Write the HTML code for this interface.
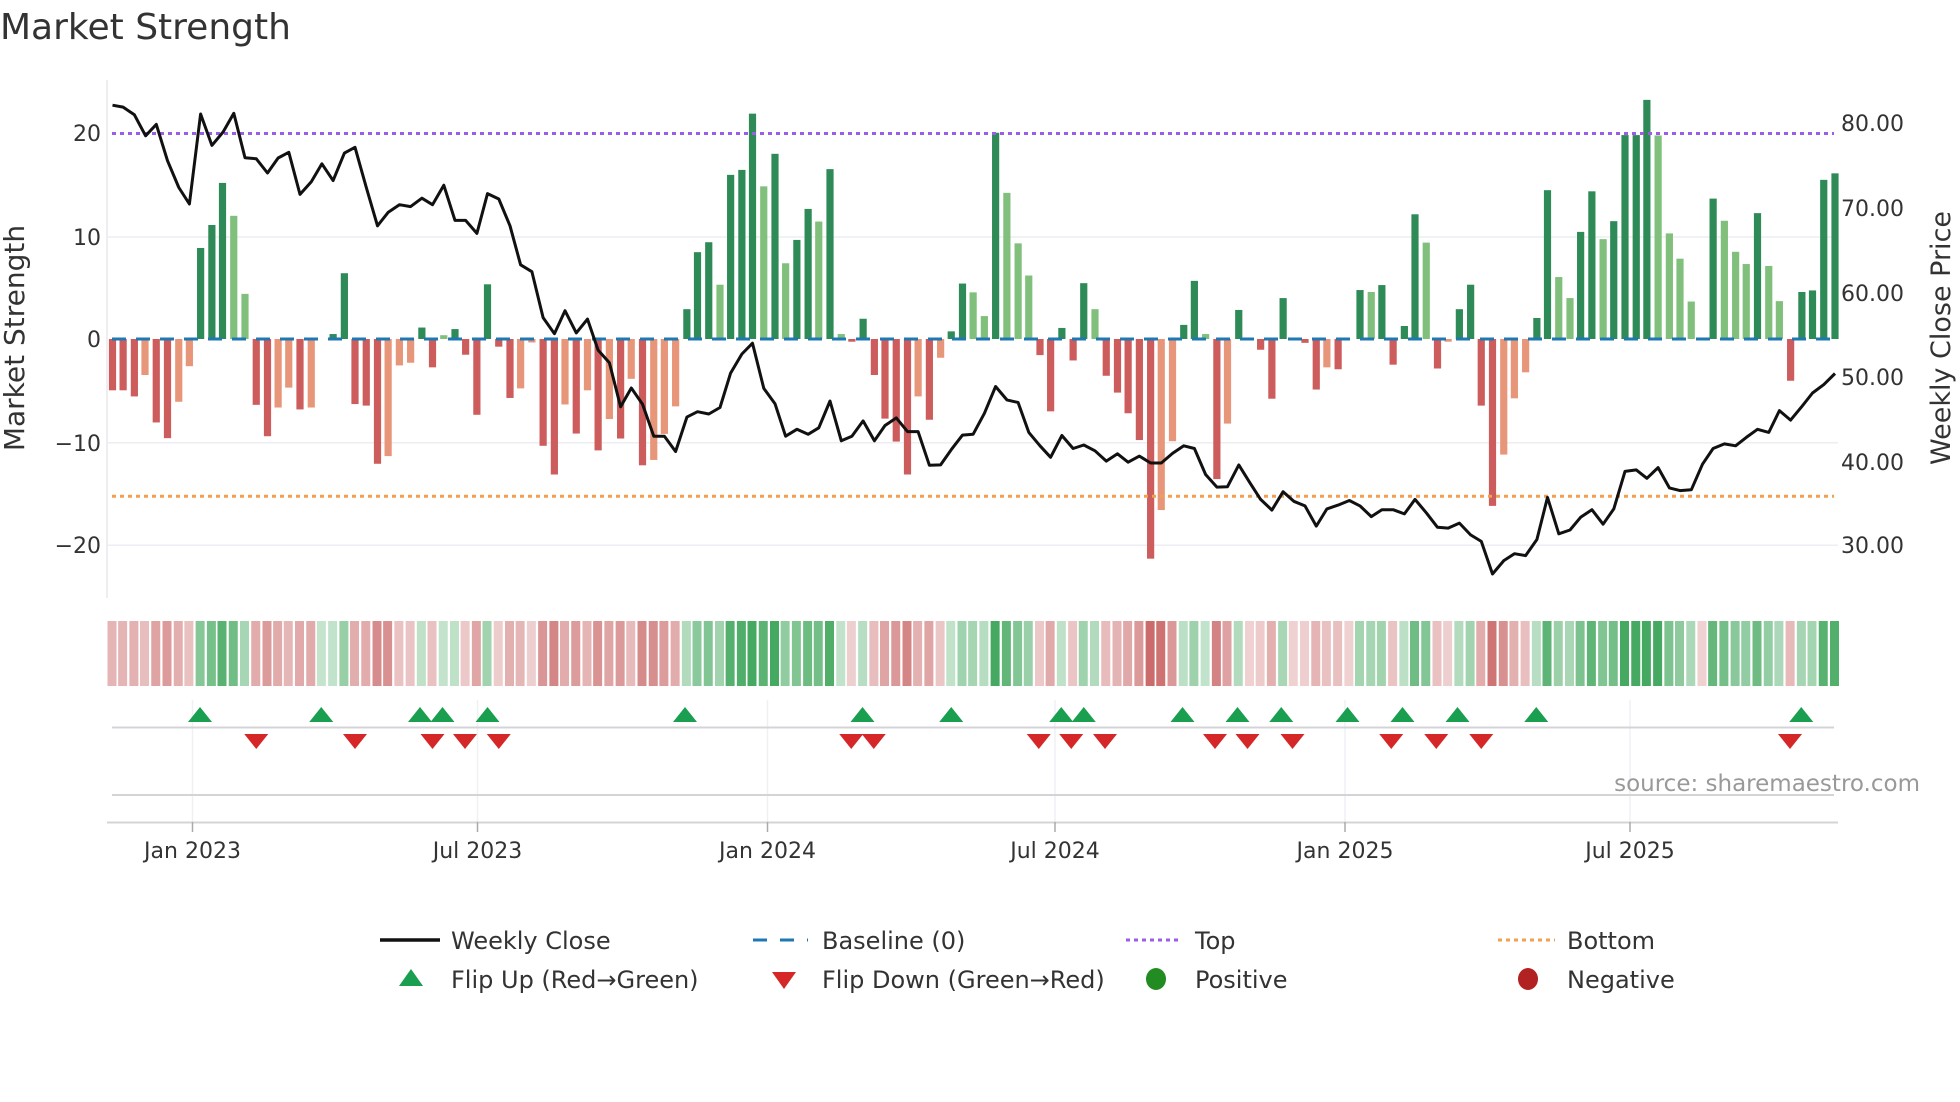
<!DOCTYPE html>
<html><head><meta charset="utf-8"><style>
html,body{margin:0;padding:0;background:#fff;}
svg{display:block;font-family:"DejaVu Sans","Liberation Sans",sans-serif;}
</style></head><body>
<svg id="s" width="1960" height="1102" viewBox="0 0 1960 1102" xmlns="http://www.w3.org/2000/svg">
<rect width="1960" height="1102" fill="#fff"/>
<text x="0" y="39" font-size="36" fill="#333">Market Strength</text>
<line x1="107" y1="80" x2="107" y2="598" stroke="#e8e8ee" stroke-width="1.5"/>
<g stroke="#eceef3" stroke-width="1.5">
<line x1="107" y1="237" x2="1838" y2="237"/>
<line x1="107" y1="442.7" x2="1838" y2="442.7"/>
<line x1="107" y1="545.3" x2="1838" y2="545.3"/>
</g>
<g font-size="22" fill="#333" text-anchor="end">
<text x="101" y="141">20</text>
<text x="101" y="245">10</text>
<text x="101" y="347">0</text>
<text x="101" y="451">−10</text>
<text x="101" y="553">−20</text>
</g>
<g font-size="22" fill="#333">
<text x="1841" y="131">80.00</text>
<text x="1841" y="216">70.00</text>
<text x="1841" y="301">60.00</text>
<text x="1841" y="385">50.00</text>
<text x="1841" y="470">40.00</text>
<text x="1841" y="553">30.00</text>
</g>
<text transform="translate(24,338) rotate(-90)" font-size="28" fill="#333" text-anchor="middle">Market Strength</text>
<text transform="translate(1950,338) rotate(-90)" font-size="27" fill="#333" text-anchor="middle">Weekly Close Price</text>
<g id="bars"></g>
<line x1="112" y1="339" x2="1834" y2="339" stroke="#1f77b4" stroke-width="3" stroke-dasharray="14,10"/>
<line x1="112" y1="133.5" x2="1834" y2="133.5" stroke="#9b5de5" stroke-width="3" stroke-dasharray="4,4"/>
<line x1="112" y1="496.3" x2="1834" y2="496.3" stroke="#f0a050" stroke-width="3" stroke-dasharray="4,4"/>
<polyline id="price" fill="none" stroke="#111" stroke-width="3" stroke-linejoin="round"/>
<g id="heat"></g>
<g stroke="#eef0f4" stroke-width="1.5">
<line x1="192.5" y1="700" x2="192.5" y2="822"/><line x1="477.5" y1="700" x2="477.5" y2="822"/>
<line x1="767.5" y1="700" x2="767.5" y2="822"/><line x1="1055" y1="700" x2="1055" y2="822"/>
<line x1="1345" y1="700" x2="1345" y2="822"/><line x1="1630" y1="700" x2="1630" y2="822"/>
</g>
<line x1="112" y1="727.5" x2="1834" y2="727.5" stroke="#d4d4d8" stroke-width="2"/>
<line x1="112" y1="795" x2="1834" y2="795" stroke="#d4d4d8" stroke-width="2"/>
<line x1="107" y1="822.5" x2="1838" y2="822.5" stroke="#d4d4d8" stroke-width="2"/>
<g stroke="#aaa" stroke-width="1.5">
<line x1="192.5" y1="822" x2="192.5" y2="832"/><line x1="477.5" y1="822" x2="477.5" y2="832"/>
<line x1="767.5" y1="822" x2="767.5" y2="832"/><line x1="1055" y1="822" x2="1055" y2="832"/>
<line x1="1345" y1="822" x2="1345" y2="832"/><line x1="1630" y1="822" x2="1630" y2="832"/>
</g>
<g id="tri"></g>
<g font-size="22" fill="#333" text-anchor="middle">
<text x="192.5" y="858">Jan 2023</text><text x="477.5" y="858">Jul 2023</text>
<text x="767.5" y="858">Jan 2024</text><text x="1055" y="858">Jul 2024</text>
<text x="1345" y="858">Jan 2025</text><text x="1630" y="858">Jul 2025</text>
</g>
<text x="1920" y="791" font-size="23" fill="#999" text-anchor="end">source: sharemaestro.com</text>
<g font-size="24" fill="#333">
<line x1="380" y1="940" x2="440" y2="940" stroke="#111" stroke-width="3.5"/>
<text x="451" y="949">Weekly Close</text>
<line x1="753" y1="940" x2="808" y2="940" stroke="#1f77b4" stroke-width="3" stroke-dasharray="14,13"/>
<text x="822" y="949">Baseline (0)</text>
<line x1="1126" y1="940" x2="1180" y2="940" stroke="#9b5de5" stroke-width="3" stroke-dasharray="4,4"/>
<text x="1195" y="949">Top</text>
<line x1="1498" y1="940" x2="1555" y2="940" stroke="#f0a050" stroke-width="3" stroke-dasharray="4,4"/>
<text x="1567" y="949">Bottom</text>
<polygon points="411,969 399,986 423,986" fill="#1a9e50"/>
<text x="451" y="988">Flip Up (Red→Green)</text>
<polygon points="772,972 796,972 784,989" fill="#d62728"/>
<text x="822" y="988">Flip Down (Green→Red)</text>
<ellipse cx="1156" cy="979" rx="10" ry="11" fill="#228b22"/>
<text x="1195" y="988">Positive</text>
<ellipse cx="1528" cy="979" rx="10" ry="11" fill="#b22222"/>
<text x="1567" y="988">Negative</text>
</g>
</svg>
<script>
var NS="http://www.w3.org/2000/svg";
var b1="180,1020,R;197,1020,R;215,1036,R;232,980,S;250,1104,R;268,1145,R;286,1050,S;303,957,S;321,648,D;339,588,D;356,478,D;374,564,L;392,768,L;410,1058,R;428,1140,R;445,1065,S;462,1013,S;480,1070,R;498,1065,S;515,884,D;533,873,D;551,714,D;568,1056,R;586,1060,R;604,1212,R;621,1192,S;639,955,S;657,948,S;675,856,D;692,960,R;710,876,L;728,860,D;745,927,R;763,1084,R;780,743,D;798,906,R;816,1040,R;833,1015,S;851,895,S;869,1165,R;887,1240,R;904,1057,S;922,1133,R;940,1020,S;957,1177,R;975,1095,S;993,1146,R;1010,990,S;1028,1216,R;1046,1202,S;1063,1134,S;1081,1062,S;1099,808,D;1116,659,D;1134,633,D;1152,744,L;1169,457,D;1187,444,D;1204,297,D;1222,487,L;1240,402,D;1257,688,L;1275,627,D;1293,546,D;1310,579,L;1328,442,D;1346,873,L;1363,893,R;1381,833,D;1399,980,R;1416,1094,R;1434,1154,R;1452,1240,R;1469,1036,S;1487,1097,R;1505,935,S;1522,866,D;1540,741,D;1557,764,L";
var b2="7,826,L;25,347,D;43,504,L;61,636,L;78,720,L;96,928,R;113,1075,R;131,857,D;149,942,R;166,740,D;184,808,L;202,982,R;220,1026,R;237,1080,R;255,1150,R;273,1460,R;290,1333,S;308,1153,S;326,849,D;343,734,D;361,873,L;379,1252,R;396,1107,S;414,810,D;432,886,D;449,914,R;467,1042,R;485,779,D;502,888,R;520,896,R;538,1018,R;555,960,S;573,965,R;591,886,D;608,758,D;626,763,L;643,745,D;661,953,R;679,852,D;696,560,D;714,634,L;732,963,R;749,893,S;767,808,D;785,744,D;802,1060,R;820,1322,R;838,1188,S;855,1041,S;873,973,S;891,831,D;908,497,D;926,724,L;944,779,L;961,606,D;979,500,D;997,625,L;1014,578,D;1032,353,D;1050,353,D;1067,261,D;1085,354,L;1103,610,L;1120,676,L;1138,788,L;1156,886,D;1173,519,D;1191,577,L;1209,658,L;1226,690,L;1244,557,D;1262,695,L;1279,787,L;1297,995,R;1315,763,D;1332,759,D;1350,470,D;1368,453,D";
var col={D:"#2e8b57",L:"#80c07c",R:"#cd5c5c",S:"#e8967a"};
var bars=document.getElementById("bars"),heat=document.getElementById("heat");
var all=[];
b1.split(";").forEach(function(s){var p=s.split(",");all.push([+p[0]*0.625,+p[1]*0.38265,p[2]]);});
b2.split(";").forEach(function(s){var p=s.split(",");all.push([980+ +p[0]*0.625,+p[1]*0.38265,p[2]]);});
all.forEach(function(a){
 var x=a[0],y=a[1],z=339,h=Math.abs(y-z);
 if(h>0.8){var r=document.createElementNS(NS,"rect");r.setAttribute("x",x-3.6);r.setAttribute("width",7.2);
 r.setAttribute("y",Math.min(y,z));r.setAttribute("height",h);r.setAttribute("fill",col[a[2]]);bars.appendChild(r);}
 var v=(z-y)/10.2;var m=Math.min(Math.abs(v)/18,1);var c;
 if(v>=0) c="rgba(50,160,80,"+(0.28+0.62*m)+")"; else c="rgba(190,70,70,"+(0.25+0.55*m)+")";
 var q=document.createElementNS(NS,"rect");q.setAttribute("x",x-5);q.setAttribute("width",9);q.setAttribute("y",621);q.setAttribute("height",65);q.setAttribute("fill",c);heat.appendChild(q);
});
var p1="180,275;197,280;215,300;233,355;250,325;268,420;286,490;303,533;321,298;339,380;357,345;374,296;392,412;410,415;428,452;445,413;462,398;480,508;498,475;515,428;533,472;551,400;568,385;586,490;604,590;621,555;639,535;657,540;675,518;692,535;710,484;728,576;745,576;763,610;780,506;798,520;816,590;833,692;851,710;869,830;887,872;904,812;922,870;940,834;957,915;975,948;993,1063;1010,1014;1028,1056;1046,1140;1063,1140;1081,1180;1099,1090;1116,1076;1134,1082;1152,1065;1169,975;1187,925;1204,897;1222,1015;1240,1055;1257,1140;1275,1122;1293,1135;1310,1118;1328,1048;1346,1152;1363,1140;1381,1100;1399,1152;1416,1112;1434,1092;1452,1128;1469,1128;1487,1216;1505,1215;1522,1175;1540,1137;1557,1135";
var p2="7,1080;25,1010;43,1045;61,1052;78,1130;96,1165;113,1195;131,1138;149,1172;166,1163;184,1178;202,1205;220,1186;237,1208;255,1192;273,1210;290,1210;308,1185;326,1165;343,1172;361,1240;379,1273;396,1272;414,1215;432,1262;449,1305;467,1333;485,1285;502,1310;520,1322;538,1375;555,1330;573,1320;591,1308;608,1322;626,1350;643,1332;661,1332;679,1343;696,1305;714,1340;732,1378;749,1380;767,1367;785,1398;802,1415;820,1500;838,1465;855,1447;873,1452;891,1410;908,1300;926,1395;944,1385;961,1352;979,1332;997,1370;1014,1330;1032,1232;1050,1228;1067,1250;1085,1222;1103,1275;1120,1282;1138,1280;1156,1213;1173,1172;1191,1160;1209,1165;1226,1143;1244,1122;1262,1130;1279,1073;1297,1098;1315,1062;1332,1027;1350,1005;1368,976";
var pts=[];
p1.split(";").forEach(function(s){var p=s.split(",");pts.push((+p[0]*0.625).toFixed(1)+","+(+p[1]*0.38265).toFixed(1));});
p2.split(";").forEach(function(s){var p=s.split(",");pts.push((980+ +p[0]*0.625).toFixed(1)+","+(+p[1]*0.38265).toFixed(1));});
document.getElementById("price").setAttribute("points",pts.join(" "));
var up=[160,257,336,354,390,548,690,761,849,867,946,990,1025,1078,1122,1166,1229,1441];
var dn=[205,284,346,372,399,681,699,831,857,884,972,998,1034,1113,1149,1185,1432];
var tri=document.getElementById("tri");
up.forEach(function(d){var x=d*1.25;var p=document.createElementNS(NS,"polygon");p.setAttribute("points",(x)+",707 "+(x-12)+",722 "+(x+12)+",722");p.setAttribute("fill","#1a9e50");tri.appendChild(p);});
dn.forEach(function(d){var x=d*1.25;var p=document.createElementNS(NS,"polygon");p.setAttribute("points",(x-12)+",734 "+(x+12)+",734 "+x+",749");p.setAttribute("fill","#d62728");tri.appendChild(p);});
</script>
</body></html>
